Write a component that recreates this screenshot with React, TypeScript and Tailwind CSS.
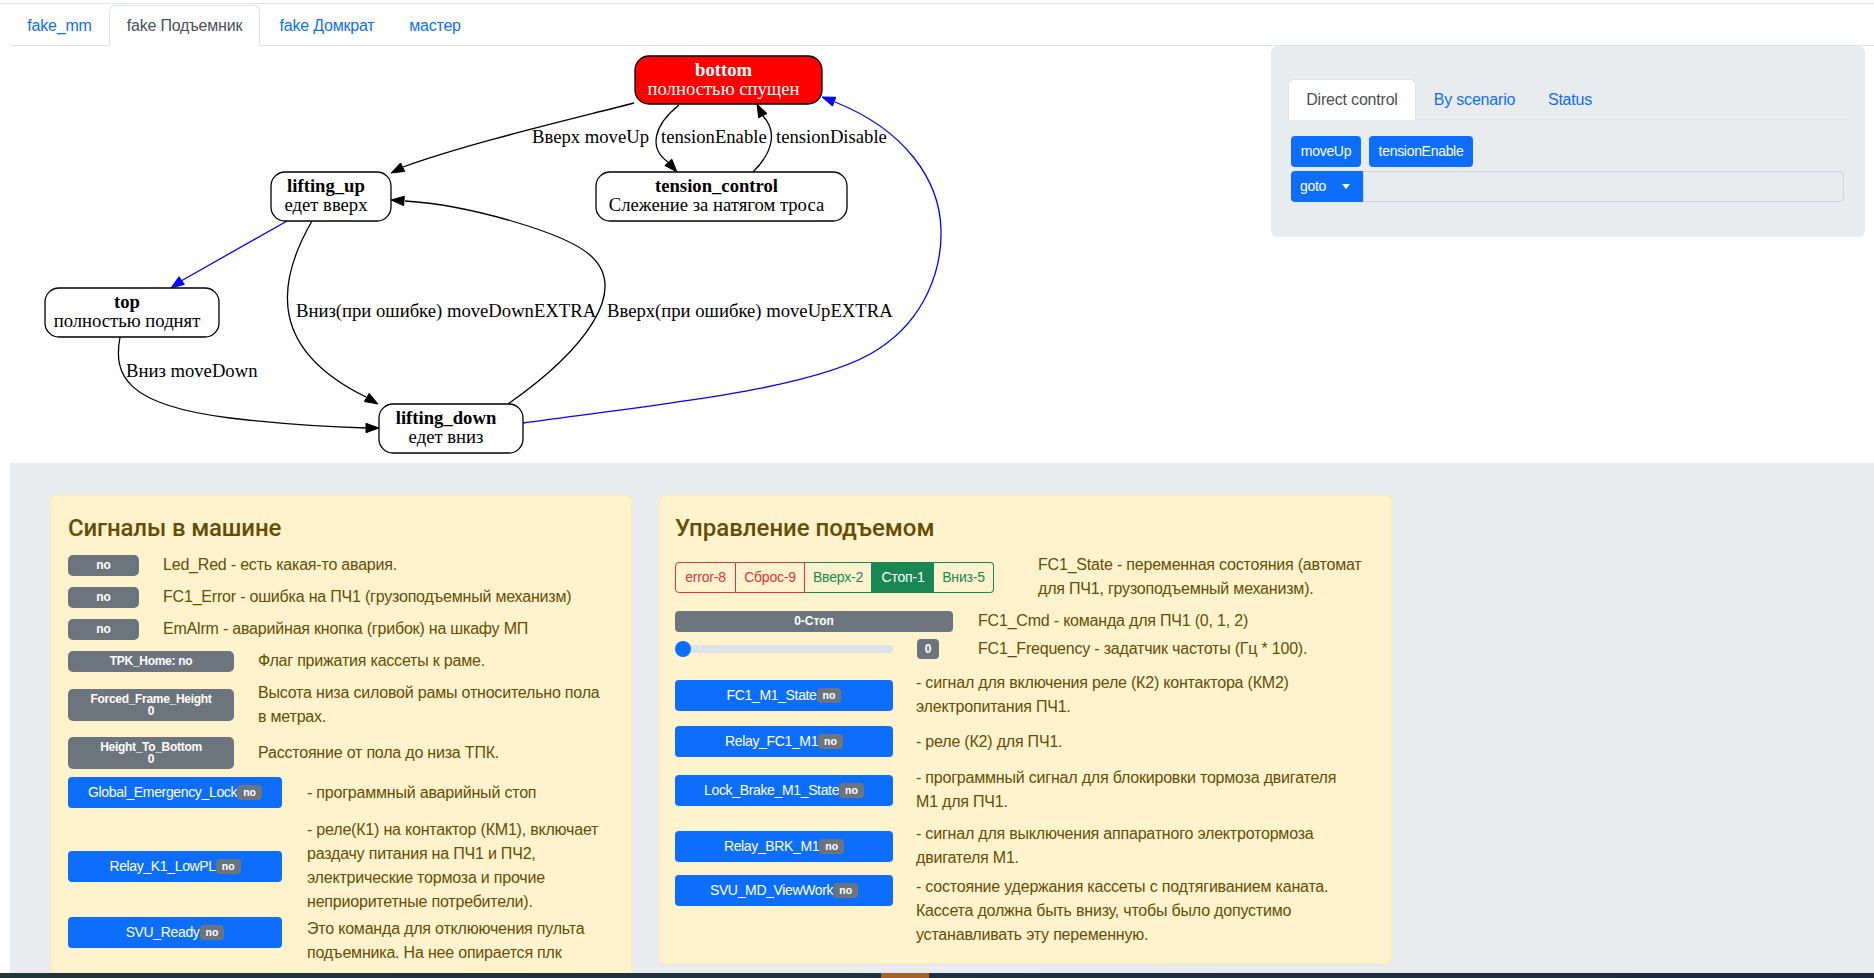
import React from "react";

function arrowPts(fx: number, fy: number, tx: number, ty: number, len = 13, hw = 4.7) {
  const dx = tx - fx;
  const dy = ty - fy;
  const d = Math.hypot(dx, dy);
  const ux = dx / d;
  const uy = dy / d;
  const bx = tx - ux * len;
  const by = ty - uy * len;
  const px = -uy * hw;
  const py = ux * hw;
  return `${tx},${ty} ${bx + px},${by + py} ${bx - px},${by - py}`;
}

const SERIF = "'Liberation Serif', 'Times New Roman', serif";

function Node({
  x, y, w, h, title, sub, fill = "white", color = "black",
}: { x: number; y: number; w: number; h: number; title: string; sub: string; fill?: string; color?: string }) {
  const cx = x + w / 2 - 5;
  return (
    <g>
      <rect x={x} y={y} width={w} height={h} rx={14} ry={14} fill={fill} stroke="black" strokeWidth={1.3} />
      <text x={cx} y={y + 19.5} textAnchor="middle" fontFamily={SERIF} fontSize={18.67} fontWeight="bold" fill={color}>
        {title}
      </text>
      <text x={cx} y={y + 38.5} textAnchor="middle" fontFamily={SERIF} fontSize={18.67} fill={color}>
        {sub}
      </text>
    </g>
  );
}

function Label({ x, y, t }: { x: number; y: number; t: string }) {
  return (
    <text x={x} y={y} fontFamily={SERIF} fontSize={18.67} fill="black">
      {t}
    </text>
  );
}

function Diagram() {
  return (
    <svg width={1000} height={417} viewBox="10 46 1000 417" className="block shrink-0">
      {/* edges */}
      <path d="M634,103 C560,122 470,143 403,167" fill="none" stroke="black" strokeWidth={1.3} />
      <polygon points={arrowPts(403, 167, 391, 173)} fill="black" stroke="black" />
      <path d="M679,105 C654,125 648,148 668,162" fill="none" stroke="black" strokeWidth={1.3} />
      <polygon points={arrowPts(668, 162, 677, 172)} fill="black" stroke="black" />
      <path d="M753,172 C775,150 776,130 763,116" fill="none" stroke="black" strokeWidth={1.3} />
      <polygon points={arrowPts(763, 116, 757, 104)} fill="black" stroke="black" />
      <path d="M287,221 L181,281" fill="none" stroke="#0000ff" strokeWidth={1.3} />
      <polygon points={arrowPts(181, 281, 171, 288)} fill="#0000ff" stroke="#0000ff" />
      <path d="M312,221 C275,285 270,350 366,397" fill="none" stroke="black" strokeWidth={1.3} />
      <polygon points={arrowPts(366, 397, 378, 404)} fill="black" stroke="black" />
      <path d="M508,404 C585,350 630,290 590,255 C565,233 470,205 405,201" fill="none" stroke="black" strokeWidth={1.3} />
      <polygon points={arrowPts(405, 201, 391, 200)} fill="black" stroke="black" />
      <path d="M120,337 C113,375 125,405 230,418 C290,425 330,427 366,428" fill="none" stroke="black" strokeWidth={1.3} />
      <polygon points={arrowPts(366, 428, 379, 428)} fill="black" stroke="black" />
      <path
        d="M523,423 C650,405 820,390 880,348 C925,318 942,270 941,230 C940,180 905,130 835,102"
        fill="none"
        stroke="#0000ff"
        strokeWidth={1.3}
      />
      <polygon points={arrowPts(835, 102, 822, 97)} fill="#0000ff" stroke="#0000ff" />

      {/* nodes */}
      <Node x={635} y={56} w={187} h={48} title="bottom" sub="полностью спущен" fill="#ff0000" color="white" />
      <Node x={271} y={172} w={120} h={49} title="lifting_up" sub="едет вверх" />
      <Node x={596} y={172} w={251} h={49} title="tension_control" sub="Слежение за натягом троса" />
      <Node x={45} y={288} w={174} h={49} title="top" sub="полностью поднят" />
      <Node x={379} y={404} w={144} h={49} title="lifting_down" sub="едет вниз" />

      {/* labels */}
      <Label x={532} y={143} t="Вверх moveUp" />
      <Label x={661} y={143} t="tensionEnable" />
      <Label x={776} y={143} t="tensionDisable" />
      <Label x={296} y={317} t="Вниз(при ошибке) moveDownEXTRA" />
      <Label x={607} y={317} t="Вверх(при ошибке) moveUpEXTRA" />
      <Label x={126} y={377} t="Вниз moveDown" />
    </svg>
  );
}

function NoBadge() {
  return (
    <span className="inline-flex items-center h-[15px] px-[6px] rounded-[4px] bg-[#6c757d] text-white text-[10.5px] font-bold leading-none tracking-normal">
      no
    </span>
  );
}

function BlueBtn({ label, w }: { label: string; w: string }) {
  return (
    <div
      className={`${w} shrink-0 h-[31px] rounded-[4px] bg-[#0d6efd] text-white text-[14px] flex items-center justify-center tracking-[-0.35px]`}
    >
      <span>{label}</span>
      <NoBadge />
    </div>
  );
}

function Lines({ lines }: { lines: string[] }) {
  return (
    <div className="leading-[24px] whitespace-nowrap">
      {lines.map((l, i) => (
        <div key={i}>{l}</div>
      ))}
    </div>
  );
}

export default function App() {
  return (
    <div className="w-[1874px] h-[978px] overflow-hidden bg-white flex flex-col font-['Liberation_Sans',Arial,sans-serif] text-[16px] text-[#212529]">
      <div className="h-[3px] shrink-0" />
      <div className="h-px shrink-0 bg-[#dee2e6]" />
      <div className="h-px shrink-0" />

      <div className="ml-[10px] flex flex-col shrink-0">
        {/* top nav tabs */}
        <div className="h-[41px] flex items-end border-b border-[#dee2e6] tracking-[-0.2px]">
          <div className="w-[99px] h-[41px] -mb-px flex items-center justify-center text-[#0d6efd]">fake_mm</div>
          <div className="w-[151px] h-[41px] -mb-px flex items-center justify-center text-[#495057] bg-white border border-[#dee2e6] border-b-white rounded-t-[6px]">
            fake Подъемник
          </div>
          <div className="w-[134px] h-[41px] -mb-px flex items-center justify-center text-[#0d6efd]">fake Домкрат</div>
          <div className="w-[82px] h-[41px] -mb-px flex items-center justify-center text-[#0d6efd]">мастер</div>
        </div>

        {/* diagram + control panel */}
        <div className="h-[417px] flex">
          <Diagram />
          <div className="flex-1" />
          <div className="w-[594px] h-[191px] mr-[9px] rounded-[6px] bg-[#e9ecef] pt-[33px] px-[17px]">
            <div className="h-[41px] flex items-end border-b border-[#dee2e6] tracking-[-0.2px]">
              <div className="w-[128px] h-[41px] -mb-px flex items-center justify-center bg-white text-[#495057] border border-[#dee2e6] border-b-white rounded-t-[6px]">
                Direct control
              </div>
              <div className="w-[117px] h-[41px] -mb-px flex items-center justify-center text-[#0d6efd]">By scenario</div>
              <div className="w-[74px] h-[41px] -mb-px flex items-center justify-center text-[#0d6efd]">Status</div>
            </div>
            <div className="ml-[3px] mt-[16px] flex gap-[8px] text-[14px] text-white tracking-[-0.3px]">
              <div className="w-[70px] h-[31px] rounded-[4px] bg-[#0d6efd] flex items-center justify-center">moveUp</div>
              <div className="w-[104px] h-[31px] rounded-[4px] bg-[#0d6efd] flex items-center justify-center">
                tensionEnable
              </div>
            </div>
            <div className="ml-[3px] mt-[4px] flex h-[31px] w-[553px]">
              <div className="w-[72px] h-[31px] rounded-l-[4px] bg-[#0d6efd] text-white text-[14px] flex items-center pl-[9px]">
                <span className="tracking-[-0.3px]">goto</span>
                <span className="ml-[16px] w-0 h-0 border-t-[5px] border-t-white border-x-[4.5px] border-x-transparent" />
              </div>
              <div className="flex-1 h-[31px] bg-[#e9ecef] border border-[#ced4da] rounded-r-[4px]" />
            </div>
          </div>
        </div>

        {/* bottom gray area */}
        <div className="h-[510px] bg-[#e9ecef] overflow-hidden pt-[32px] pl-[40px] flex items-start gap-[27px] text-[#664d03] tracking-[-0.2px]">
          {/* left card */}
          <div className="w-[582px] shrink-0 bg-[#fff3cd] border border-[#ffecb5] rounded-[6px] pl-[17px] pr-[16px] pt-[18px] pb-[16px]">
            <div className="h-[29px] leading-[29px] text-[24px] font-['Roboto',sans-serif] font-medium tracking-[-0.15px] mb-[10px]">
              Сигналы в машине
            </div>

            <div className="flex items-center mb-[8px]">
              <div className="w-[71px] h-[21px] shrink-0 rounded-[5px] bg-[#6c757d] text-white text-[12px] font-bold flex items-center justify-center tracking-normal">
                no
              </div>
              <div className="ml-[24px] leading-[24px] whitespace-nowrap">Led_Red - есть какая-то авария.</div>
            </div>
            <div className="flex items-center mb-[8px]">
              <div className="w-[71px] h-[21px] shrink-0 rounded-[5px] bg-[#6c757d] text-white text-[12px] font-bold flex items-center justify-center tracking-normal">
                no
              </div>
              <div className="ml-[24px] leading-[24px] whitespace-nowrap">FC1_Error - ошибка на ПЧ1 (грузоподъемный механизм)</div>
            </div>
            <div className="flex items-center mb-[8px]">
              <div className="w-[71px] h-[21px] shrink-0 rounded-[5px] bg-[#6c757d] text-white text-[12px] font-bold flex items-center justify-center tracking-normal">
                no
              </div>
              <div className="ml-[24px] leading-[24px] whitespace-nowrap">EmAlrm - аварийная кнопка (грибок) на шкафу МП</div>
            </div>
            <div className="flex items-center mb-[8px]">
              <div className="w-[166px] h-[21px] shrink-0 rounded-[5px] bg-[#6c757d] text-white text-[12px] font-bold flex items-center justify-center tracking-[-0.3px]">
                TPK_Home: no
              </div>
              <div className="ml-[24px] leading-[24px] whitespace-nowrap">Флаг прижатия кассеты к раме.</div>
            </div>
            <div className="flex items-center mb-[8px]">
              <div className="w-[166px] h-[32px] shrink-0 rounded-[5px] bg-[#6c757d] text-white text-[12px] leading-[12px] font-bold flex flex-col items-center justify-center tracking-[-0.3px]">
                <span>Forced_Frame_Height</span>
                <span>0</span>
              </div>
              <div className="ml-[24px]">
                <Lines lines={["Высота низа силовой рамы относительно пола", "в метрах."]} />
              </div>
            </div>
            <div className="flex items-center mb-[8px]">
              <div className="w-[166px] h-[32px] shrink-0 rounded-[5px] bg-[#6c757d] text-white text-[12px] leading-[12px] font-bold flex flex-col items-center justify-center tracking-[-0.3px]">
                <span>Height_To_Bottom</span>
                <span>0</span>
              </div>
              <div className="ml-[24px] leading-[24px] whitespace-nowrap">Расстояние от пола до низа ТПК.</div>
            </div>
            <div className="flex items-center mb-[10px]">
              <BlueBtn label="Global_Emergency_Lock" w="w-[214px]" />
              <div className="ml-[25px] leading-[24px] whitespace-nowrap">- программный аварийный стоп</div>
            </div>
            <div className="flex items-center mb-[3px]">
              <BlueBtn label="Relay_K1_LowPL" w="w-[214px]" />
              <div className="ml-[25px]">
                <Lines
                  lines={[
                    "- реле(К1) на контактор (КМ1), включает",
                    "раздачу питания на ПЧ1 и ПЧ2,",
                    "электрические тормоза и прочие",
                    "неприоритетные потребители).",
                  ]}
                />
              </div>
            </div>
            <div className="flex items-start">
              <BlueBtn label="SVU_Ready" w="w-[214px]" />
              <div className="ml-[25px]">
                <Lines lines={["Это команда для отклюючения пульта", "подъемника. На нее опирается плк"]} />
              </div>
            </div>
          </div>

          {/* right card */}
          <div className="w-[733px] shrink-0 bg-[#fff3cd] border border-[#ffecb5] rounded-[6px] pl-[15px] pr-[16px] pt-[18px] pb-[16px]">
            <div className="h-[29px] leading-[29px] text-[24px] font-['Roboto',sans-serif] font-medium tracking-normal mb-[10px]">
              Управление подъемом
            </div>

            <div className="flex items-center mb-[8px]">
              <div className="w-[319px] h-[31px] shrink-0 flex text-[14px] tracking-[-0.2px]">
                <div className="w-[61px] h-[31px] flex items-center justify-center border border-[#dc3545] rounded-l-[4px] text-[#dc3545]">
                  error-8
                </div>
                <div className="w-[69px] h-[31px] flex items-center justify-center border border-l-0 border-[#dc3545] text-[#dc3545]">
                  Сброс-9
                </div>
                <div className="w-[67px] h-[31px] flex items-center justify-center border border-l-0 border-[#198754] text-[#198754]">
                  Вверх-2
                </div>
                <div className="w-[62px] h-[31px] flex items-center justify-center bg-[#198754] text-white">Стоп-1</div>
                <div className="w-[60px] h-[31px] flex items-center justify-center border border-l-0 border-[#198754] rounded-r-[4px] text-[#198754]">
                  Вниз-5
                </div>
              </div>
              <div className="ml-[44px]">
                <Lines lines={["FC1_State - переменная состояния (автомат", "для ПЧ1, грузоподъемный механизм)."]} />
              </div>
            </div>

            <div className="flex items-center mb-[4px]">
              <div className="w-[278px] h-[21px] shrink-0 rounded-[4px] bg-[#6c757d] text-white text-[12px] font-bold flex items-center justify-center tracking-normal">
                0-Стоп
              </div>
              <div className="ml-[25px] leading-[24px] whitespace-nowrap">FC1_Cmd - команда для ПЧ1 (0, 1, 2)</div>
            </div>

            <div className="flex items-center mb-[10px]">
              <div className="relative w-[218px] h-[8px] shrink-0 rounded-full bg-[#dee2e6]">
                <div className="absolute left-0 top-[-4px] w-[16px] h-[16px] rounded-full bg-[#0d6efd]" />
              </div>
              <div className="ml-[24px] w-[22px] h-[20px] shrink-0 rounded-[4px] bg-[#6c757d] text-white text-[12px] font-bold flex items-center justify-center tracking-normal">
                0
              </div>
              <div className="ml-[39px] leading-[24px] whitespace-nowrap">FC1_Frequency - задатчик частоты (Гц * 100).</div>
            </div>

            <div className="flex items-center mb-[7px]">
              <BlueBtn label="FC1_M1_State" w="w-[218px]" />
              <div className="ml-[23px]">
                <Lines lines={["- сигнал для включения реле (К2) контактора (КМ2)", "электропитания ПЧ1."]} />
              </div>
            </div>
            <div className="flex items-center mb-[9px]">
              <BlueBtn label="Relay_FC1_M1" w="w-[218px]" />
              <div className="ml-[23px] leading-[24px] whitespace-nowrap">- реле (К2) для ПЧ1.</div>
            </div>
            <div className="flex items-center mb-[8px]">
              <BlueBtn label="Lock_Brake_M1_State" w="w-[218px]" />
              <div className="ml-[23px]">
                <Lines lines={["- программный сигнал для блокировки тормоза двигателя", "М1 для ПЧ1."]} />
              </div>
            </div>
            <div className="flex items-center mb-[5px]">
              <BlueBtn label="Relay_BRK_M1" w="w-[218px]" />
              <div className="ml-[23px]">
                <Lines lines={["- сигнал для выключения аппаратного электротормоза", "двигателя М1."]} />
              </div>
            </div>
            <div className="flex items-start">
              <BlueBtn label="SVU_MD_ViewWork" w="w-[218px]" />
              <div className="ml-[23px]">
                <Lines
                  lines={[
                    "- состояние удержания кассеты с подтягиванием каната.",
                    "Кассета должна быть внизу, чтобы было допустимо",
                    "устанавливать эту переменную.",
                  ]}
                />
              </div>
            </div>
          </div>
        </div>
      </div>

      {/* taskbar strip */}
      <div className="h-[5px] shrink-0 bg-[linear-gradient(90deg,#21363b,#1c2a40)] flex">
        <div className="ml-[881px] w-[48px] h-[5px] bg-[#a5632c]" />
      </div>
    </div>
  );
}
